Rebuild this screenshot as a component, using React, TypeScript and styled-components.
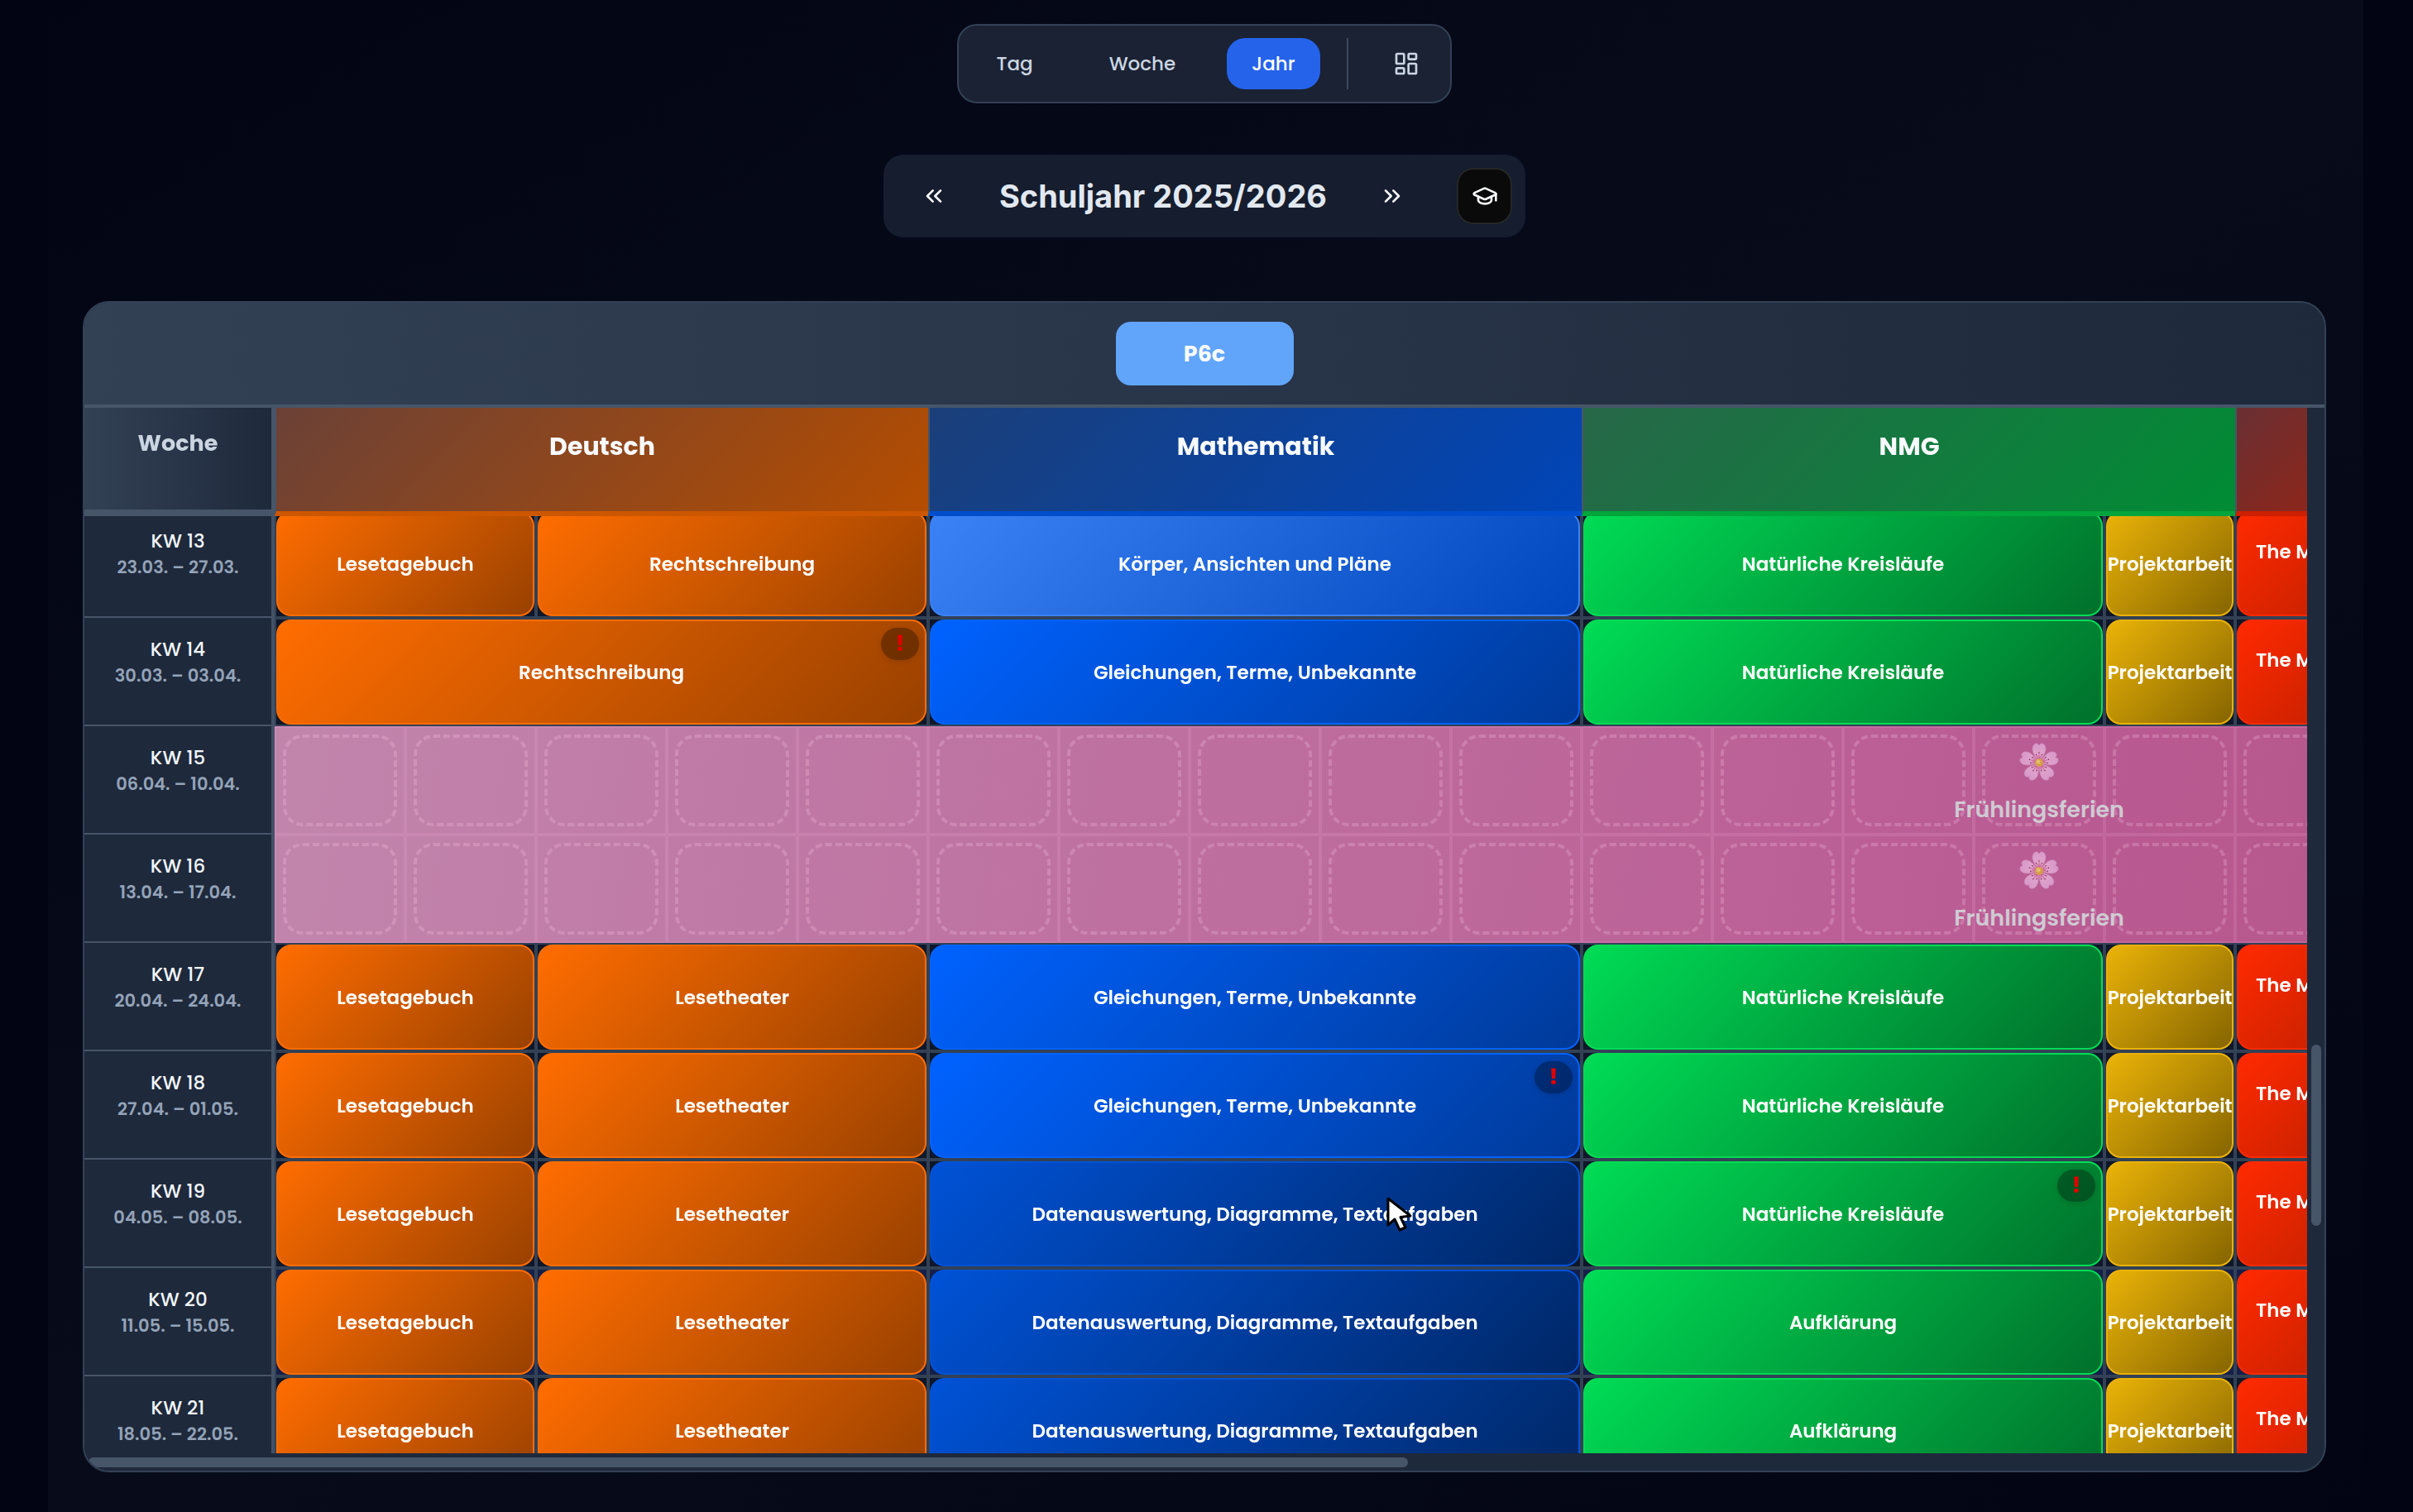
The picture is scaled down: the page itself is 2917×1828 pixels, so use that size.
import React, { useLayoutEffect, useRef } from "react";
import styled, { createGlobalStyle } from "styled-components";
import {
  ChevronsLeft,
  ChevronsRight,
  GraduationCap,
  LayoutDashboard,
} from "lucide-react";

const COLUMN = 158;
const COLUMN_COUNT = 27;
const WEEK_COLUMN = 230;
const ROW = 131;

const GlobalStyle = createGlobalStyle`
  *, *::before, *::after { box-sizing: border-box; }
  body {
    margin: 0;
    background: #020414;
    color: #e2e8f0;
    font-family: Poppins, Inter, "Liberation Sans", sans-serif;
  }
  button { font: inherit; color: inherit; border: 0; background: none; cursor: pointer; }
`;

const Page = styled.div`
  position: relative;
  height: 100vh;
  padding: 0 60px 0 58px;
  overflow: hidden;
`;

const Main = styled.main`
  display: flex;
  flex-direction: column;
  align-items: center;
  height: 100%;
  padding: 29px 45px 48px 42px;
  background: linear-gradient(to bottom right, #020414, #080c1a 50%, #020413);
`;

const Toolbar = styled.nav`
  display: flex;
  align-items: center;
  gap: 32px;
  padding: 15px;
  border: 2px solid #334155;
  border-radius: 24px;
  background: #1a2233;
`;

const ViewButton = styled.button<{ $active?: boolean }>`
  height: 62px;
  padding: 0 30px;
  border-radius: 22px;
  font-size: 23px;
  font-weight: 500;
  color: ${(p) => (p.$active ? "#ffffff" : "#cbd5e1")};
  background: ${(p) => (p.$active ? "#2563eb" : "transparent")};
`;

const Divider = styled.span`
  width: 2px;
  height: 62px;
  background: #3b4a60;
`;

const LayoutButton = styled.button`
  display: flex;
  align-items: center;
  justify-content: center;
  width: 76px;
  height: 62px;
  padding: 0;
  color: #cbd5e1;
`;

const YearBar = styled.div`
  display: flex;
  align-items: center;
  gap: 45px;
  height: 100px;
  margin: 62px 0 77px;
  padding: 0 16px 0 28px;
  border-radius: 24px;
  background: #151d2e;
`;

const YearTitle = styled.h1`
  margin: 0;
  font-family: Inter, "Liberation Sans", sans-serif;
  font-size: 38px;
  font-weight: 700;
  line-height: 48px;
  white-space: nowrap;
`;

const SquareButton = styled.button<{ $dark?: boolean }>`
  display: flex;
  align-items: center;
  justify-content: center;
  width: 67px;
  height: 68px;
  padding: 0;
  border-radius: 20px;
  color: #f8fafc;
  ${(p) => p.$dark && "background: #0a0a0a; border: 2px solid #262626;"}
`;

const Card = styled.section`
  display: flex;
  flex: 1;
  flex-direction: column;
  align-self: stretch;
  min-height: 0;
  border: 2px solid #334155;
  border-radius: 32px;
  overflow: hidden;
  background: #1e293b;
`;

const ClassBar = styled.header`
  display: flex;
  align-items: center;
  justify-content: center;
  flex: none;
  height: 127px;
  border-bottom: 4px solid #475569;
  background: linear-gradient(90deg, #334155, #1e293b);
`;

const ClassButton = styled.button`
  width: 215px;
  height: 77px;
  padding: 0;
  border-radius: 18px;
  background: #60a5fa;
  color: #f8fafc;
  font-size: 27px;
  font-weight: 700;
`;

const ScrollFrame = styled.div`
  display: grid;
  flex: 1;
  min-height: 0;
  grid-template-columns: minmax(0, 1fr) 21px;
  grid-template-rows: minmax(0, 1fr) 21px;
`;

const Viewport = styled.div`
  overflow: auto;
  scrollbar-width: none;
  background: #0f172a;
`;

const VerticalTrack = styled.div`
  display: flex;
  justify-content: center;
`;

const VerticalThumb = styled.div`
  width: 12px;
  height: 219px;
  margin-top: 770px;
  border-radius: 6px;
  background: #475569;
`;

const HorizontalTrack = styled.div`
  display: flex;
  align-items: center;
  padding: 0 5px;
`;

const HorizontalThumb = styled.div`
  width: 1595px;
  height: 12px;
  border-radius: 6px;
  background: #475569;
`;

const Plan = styled.table`
  width: ${WEEK_COLUMN + COLUMN * COLUMN_COUNT}px;
  table-layout: fixed;
  border-collapse: separate;
  border-spacing: 0;

  th, td { padding: 0; }
  thead { position: sticky; top: 0; z-index: 2; }
`;

const WeekHead = styled.th`
  height: ${ROW}px;
  padding-bottom: 38px !important;
  border-right: 4px solid #475569;
  border-bottom: 8px solid #475569;
  background: linear-gradient(90deg, #334155, #1e293b);
  color: #cbd5e1;
  font-size: 27px;
  font-weight: 700;
`;

const SubjectHead = styled.th<{ $from: string; $to: string; $line: string }>`
  height: ${ROW}px;
  padding-bottom: 32px !important;
  border-left: 2px solid #475569;
  border-bottom: 6px solid ${(p) => p.$line};
  background: linear-gradient(135deg, ${(p) => p.$from}, ${(p) => p.$to}) padding-box;
  color: #f8fafc;
  font-size: 30px;
  font-weight: 700;
`;

const WeekCell = styled.th`
  height: ${ROW}px;
  padding-top: 22px !important;
  vertical-align: top;
  border-right: 4px solid #435167;
  border-bottom: 2px solid #475569;
  background: #1e293b;
`;

const WeekName = styled.div`
  font-size: 23px;
  font-weight: 500;
  line-height: 32px;
  color: #f1f5f9;
`;

const WeekDates = styled.div`
  font-size: 21px;
  font-weight: 600;
  line-height: 32px;
  color: #94a3b8;
`;

const Slot = styled.td<{ $current?: boolean }>`
  height: ${ROW}px;
  border: 2px solid #334155;
  background: ${(p) => (p.$current ? "#15204a" : "#0f172a")};
`;

const Topic = styled.div<{ $from: string; $to: string; $cut?: boolean }>`
  position: relative;
  display: flex;
  align-items: center;
  justify-content: ${(p) => (p.$cut ? "flex-start" : "center")};
  height: 127px;
  padding: ${(p) => (p.$cut ? "0 0 30px 21px" : "0")};
  border: 2px solid ${(p) => p.$from};
  border-radius: 18px;
  background: linear-gradient(135deg, ${(p) => p.$from}, ${(p) => p.$to});
  color: #ffffff;
  font-size: 23px;
  font-weight: 600;
  white-space: nowrap;
`;

const Alert = styled.span`
  position: absolute;
  top: 8px;
  right: 7px;
  width: 46px;
  height: 39px;
  border-radius: 20px;
  background: rgba(0, 0, 0, 0.32);
  box-shadow: 0 2px 6px rgba(0, 0, 0, 0.12);
  color: #e00000;
  font-size: 26px;
  font-weight: 800;
  line-height: 39px;
  text-align: center;
`;

const HolidayCell = styled.td`
  position: relative;
  height: ${ROW}px;
  background: linear-gradient(100deg, #c185ac 0%, #bb5f96 45%, #b6568d 60%, #b0457f 100%);
`;

const HolidaySlots = styled.div`
  display: flex;
  height: ${ROW}px;
`;

const HolidaySlot = styled.div`
  flex: 1;
  padding: 8px;
  border: 2px solid rgba(255, 180, 225, 0.15);

  &::before {
    content: "";
    display: block;
    height: 100%;
    border: 4px dashed rgba(255, 200, 235, 0.24);
    border-radius: 24px;
  }
`;

const HolidayLabel = styled.div`
  position: absolute;
  inset: 0;
  display: flex;
  flex-direction: column;
  align-items: center;
  padding-top: 19px;
  color: #cfcad3;
  font-size: 27px;
  font-weight: 600;
  line-height: 36px;

  svg { margin-bottom: 16px; }
`;

const Pointer = styled.svg`
  position: absolute;
  left: 1674px;
  top: 1445px;
`;

const ORANGE = ["#ff6d00", "#994100"];
const BLUE = ["#0062ff", "#003a99"];
const SKY = ["#3b82f6", "#0047bd"];
const NAVY = ["#0052d6", "#002766"];
const GREEN = ["#00dc55", "#00702b"];
const YELLOW = ["#eab308", "#866500"];
const RED = ["#ff2a00", "#991900"];

const SUBJECTS = [
  { name: "Deutsch", span: 5, from: "#6b4137", to: "#b54d00", line: "#cc5700" },
  { name: "Mathematik", span: 5, from: "#1b3f79", to: "#0045b8", line: "#004ecc" },
  { name: "NMG", span: 5, from: "#276749", to: "#008c34", line: "#00a53c" },
  { name: "", span: 2, from: "#692f33", to: "#b31d00", line: "#cc2000" },
  { name: "", span: 10, from: "#334155", to: "#1e293b", line: "#475569" },
];

type Entry = { label: string; span: number; colors: string[]; alert?: boolean; cut?: boolean };
type Week = { name: string; dates: string; holiday?: string; current?: boolean; entries?: Entry[] };

const topic = (label: string, span: number, colors: string[], alert = false): Entry => ({
  label, span, colors, alert,
});
const diary = topic("Lesetagebuch", 2, ORANGE);
const theatre = topic("Lesetheater", 3, ORANGE);
const equations = topic("Gleichungen, Terme, Unbekannte", 5, BLUE);
const data = topic("Datenauswertung, Diagramme, Textaufgaben", 5, NAVY);
const cycles = topic("Natürliche Kreisläufe", 4, GREEN);
const education = topic("Aufklärung", 4, GREEN);
const project = topic("Projektarbeit", 1, YELLOW);
const english: Entry = { label: "The M", span: 2, colors: RED, cut: true };

const WEEKS: Week[] = [
  { name: "KW 13", dates: "23.03. – 27.03.", entries: [diary, topic("Rechtschreibung", 3, ORANGE), topic("Körper, Ansichten und Pläne", 5, SKY), cycles, project, english] },
  { name: "KW 14", dates: "30.03. – 03.04.", entries: [topic("Rechtschreibung", 5, ORANGE, true), equations, cycles, project, english] },
  { name: "KW 15", dates: "06.04. – 10.04.", holiday: "Frühlingsferien" },
  { name: "KW 16", dates: "13.04. – 17.04.", holiday: "Frühlingsferien" },
  { name: "KW 17", dates: "20.04. – 24.04.", entries: [diary, theatre, equations, cycles, project, english] },
  { name: "KW 18", dates: "27.04. – 01.05.", entries: [diary, theatre, { ...equations, alert: true }, cycles, project, english] },
  { name: "KW 19", dates: "04.05. – 08.05.", entries: [diary, theatre, data, { ...cycles, alert: true }, project, english] },
  { name: "KW 20", dates: "11.05. – 15.05.", current: true, entries: [diary, theatre, data, education, project, english] },
  { name: "KW 21", dates: "18.05. – 22.05.", entries: [diary, theatre, data, education, project, english] },
];

function Blossom() {
  return (
    <svg width="48" height="48" viewBox="-24 -24 48 48" aria-hidden="true" opacity="0.85">
      <defs>
        <linearGradient id="petal" x1="0" y1="0" x2="0" y2="1">
          <stop offset="0" stopColor="#dda3d2" />
          <stop offset="0.6" stopColor="#e6b0d6" />
          <stop offset="1" stopColor="#d0568f" />
        </linearGradient>
      </defs>
      {[0, 72, 144, 216, 288].map((angle) => (
        <g key={angle} transform={`translate(0 1) rotate(${angle})`}>
          <path
            d="M0 0 C-3 -5 -9 -12 -8 -18 C-7.500 -22 -4 -24 -2 -23 L0 -21 L2 -23 C4 -24 7.500 -22 8 -18 C9 -12 3 -5 0 0Z"
            fill="url(#petal)"
            stroke="#c583b4"
            strokeWidth="0.6"
          />
          <path d="M0 -4 V-11 M0 -4 L-3 -9 M0 -4 L3 -9" stroke="#c3568f" strokeWidth="0.7" />
          <circle cx="0" cy="-12" r="0.8" fill="#7e2f50" />
          <circle cx="-3.500" cy="-9.500" r="0.8" fill="#7e2f50" />
          <circle cx="3.500" cy="-9.500" r="0.8" fill="#7e2f50" />
        </g>
      ))}
      <circle cx="0" cy="1" r="5" fill="#d9a93c" />
      <circle cx="-1" cy="0" r="2.500" fill="#ecd06a" />
    </svg>
  );
}

function WeekRow({ week }: { week: Week }) {
  return (
    <tr>
      <WeekCell scope="row">
        <WeekName>{week.name}</WeekName>
        <WeekDates>{week.dates}</WeekDates>
      </WeekCell>
      {week.holiday && (
        <HolidayCell colSpan={COLUMN_COUNT}>
          <HolidaySlots>
            {Array.from({ length: COLUMN_COUNT }, (_, i) => (
              <HolidaySlot key={i} />
            ))}
          </HolidaySlots>
          <HolidayLabel>
            <Blossom />
            {week.holiday}
          </HolidayLabel>
        </HolidayCell>
      )}
      {week.entries?.map((entry, i) => (
        <Slot key={i} colSpan={entry.span} $current={week.current}>
          <Topic $from={entry.colors[0]} $to={entry.colors[1]} $cut={entry.cut}>
            {entry.label}
            {entry.alert && <Alert>!</Alert>}
          </Topic>
        </Slot>
      ))}
      {week.entries && <Slot colSpan={10} $current={week.current} />}
    </tr>
  );
}

export default function App() {
  const viewport = useRef<HTMLDivElement>(null);

  useLayoutEffect(() => {
    if (viewport.current) viewport.current.scrollTop = 8;
  }, []);

  return (
    <Page>
      <GlobalStyle />
      <Main>
        <Toolbar aria-label="Ansicht">
          <ViewButton>Tag</ViewButton>
          <ViewButton>Woche</ViewButton>
          <ViewButton $active aria-pressed="true">Jahr</ViewButton>
          <Divider />
          <LayoutButton aria-label="Layout">
            <LayoutDashboard size={32} />
          </LayoutButton>
        </Toolbar>

        <YearBar>
          <SquareButton aria-label="Zurück"><ChevronsLeft size={32} /></SquareButton>
          <YearTitle>Schuljahr 2025/2026</YearTitle>
          <SquareButton aria-label="Weiter"><ChevronsRight size={32} /></SquareButton>
          <SquareButton $dark aria-label="Schuljahr"><GraduationCap size={32} /></SquareButton>
        </YearBar>

        <Card>
          <ClassBar>
            <ClassButton>P6c</ClassButton>
          </ClassBar>
          <ScrollFrame>
            <Viewport ref={viewport}>
              <Plan>
                <colgroup>
                  <col width={WEEK_COLUMN} />
                  {Array.from({ length: COLUMN_COUNT }, (_, i) => (
                    <col key={i} width={COLUMN} />
                  ))}
                </colgroup>
                <thead>
                  <tr>
                    <WeekHead scope="col">Woche</WeekHead>
                    {SUBJECTS.map((s, i) => (
                      <SubjectHead key={i} scope="colgroup" colSpan={s.span} $from={s.from} $to={s.to} $line={s.line}>
                        {s.name}
                      </SubjectHead>
                    ))}
                  </tr>
                </thead>
                <tbody>
                  {WEEKS.map((week) => (
                    <WeekRow key={week.name} week={week} />
                  ))}
                </tbody>
              </Plan>
            </Viewport>
            <VerticalTrack><VerticalThumb /></VerticalTrack>
            <HorizontalTrack><HorizontalThumb /></HorizontalTrack>
          </ScrollFrame>
        </Card>
      </Main>
      <Pointer width="36" height="46" viewBox="0 0 36 46" aria-hidden="true">
        <path
          d="M4 4 V36 L12 29 L18 42 L25 39 L19 26.500 L31 25 Z"
          fill="#ffffff"
          stroke="#000000"
          strokeWidth="3"
          strokeLinejoin="round"
        />
      </Pointer>
    </Page>
  );
}
